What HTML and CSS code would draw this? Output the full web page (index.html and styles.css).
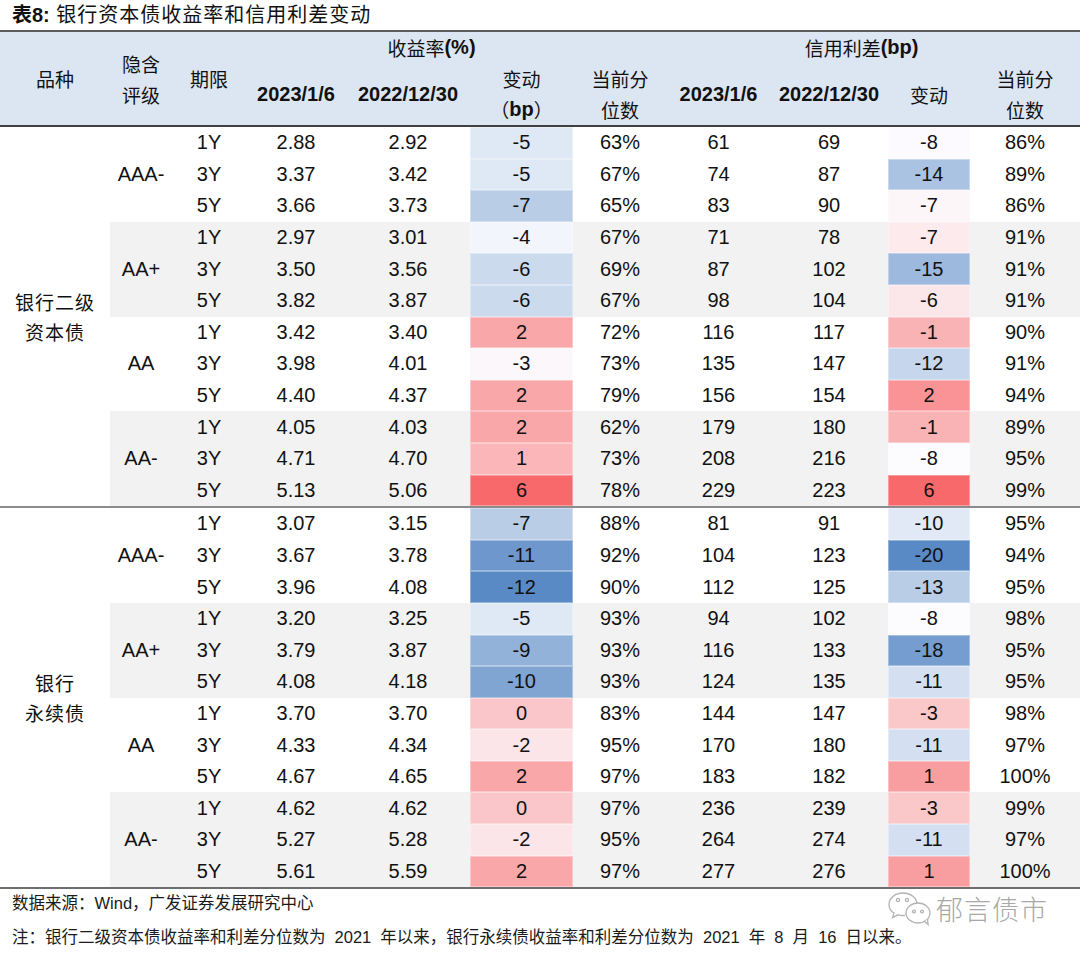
FILE: index.html
```html
<!DOCTYPE html>
<html lang="zh-CN">
<head>
<meta charset="utf-8">
<title>表8</title>
<link rel="stylesheet" href="styles.css">
</head>
<body>
<div class="title"><span class="b">表8:</span> 银行资本债收益率和信用利差变动</div>
<table class="tbl">
<colgroup>
<col style="width:110px"><col style="width:62px"><col style="width:74px"><col style="width:100px"><col style="width:124px"><col style="width:103px"><col style="width:94px"><col style="width:103px"><col style="width:118px"><col style="width:82px"><col style="width:110px">
</colgroup>
<thead>
<tr>
<th rowspan="3" class="cn">品种</th>
<th rowspan="3" class="cn">隐含<br>评级</th>
<th rowspan="3" class="cn">期限</th>
<th colspan="4" class="grp-l"><span class="cn">收益率</span><span class="b">(%)</span></th>
<th colspan="4" class="grp-r"><span class="cn">信用利差</span><span class="b">(bp)</span></th>
</tr>
<tr>
<th rowspan="2" class="b">2023/1/6</th>
<th rowspan="2" class="b">2022/12/30</th>
<th class="cn">变动</th>
<th rowspan="2" class="cn">当前分<br>位数</th>
<th rowspan="2" class="b">2023/1/6</th>
<th rowspan="2" class="b">2022/12/30</th>
<th rowspan="2" class="cn">变动</th>
<th rowspan="2" class="cn">当前分<br>位数</th>
</tr>
<tr>
<th><span class="cn">（</span><span class="b">bp</span><span class="cn">）</span></th>
</tr>
</thead>
<tbody>
<tr><td rowspan="12" class="cat">银行二级<br>资本债</td><td rowspan="3">AAA-</td><td>1Y</td><td>2.88</td><td>2.92</td><td class="hm" style="background:#dfe8f5">-5</td><td>63%</td><td>61</td><td>69</td><td class="hm" style="background:#fcfaff">-8</td><td>86%</td></tr>
<tr><td>3Y</td><td>3.37</td><td>3.42</td><td class="hm" style="background:#dfe8f5">-5</td><td>67%</td><td>74</td><td>87</td><td class="hm" style="background:#abc3e3">-14</td><td>89%</td></tr>
<tr><td>5Y</td><td>3.66</td><td>3.73</td><td class="hm" style="background:#b9cde7">-7</td><td>65%</td><td>83</td><td>90</td><td class="hm" style="background:#fcf6f9">-7</td><td>86%</td></tr>
<tr class="g"><td rowspan="3">AA+</td><td>1Y</td><td>2.97</td><td>3.01</td><td class="hm" style="background:#f3f5fc">-4</td><td>67%</td><td>71</td><td>78</td><td class="hm" style="background:#fceaed">-7</td><td>91%</td></tr>
<tr class="g"><td>3Y</td><td>3.50</td><td>3.56</td><td class="hm" style="background:#ccdaee">-6</td><td>69%</td><td>87</td><td>102</td><td class="hm" style="background:#9eb9de">-15</td><td>91%</td></tr>
<tr class="g"><td>5Y</td><td>3.82</td><td>3.87</td><td class="hm" style="background:#ccdaee">-6</td><td>67%</td><td>98</td><td>104</td><td class="hm" style="background:#fbe7ea">-6</td><td>91%</td></tr>
<tr><td rowspan="3">AA</td><td>1Y</td><td>3.42</td><td>3.40</td><td class="hm" style="background:#faa7a9">2</td><td>72%</td><td>116</td><td>117</td><td class="hm" style="background:#fab3b5">-1</td><td>90%</td></tr>
<tr><td>3Y</td><td>3.98</td><td>4.01</td><td class="hm" style="background:#fcf7fa">-3</td><td>73%</td><td>135</td><td>147</td><td class="hm" style="background:#c6d6ec">-12</td><td>91%</td></tr>
<tr><td>5Y</td><td>4.40</td><td>4.37</td><td class="hm" style="background:#faa7a9">2</td><td>79%</td><td>156</td><td>154</td><td class="hm" style="background:#f99395">2</td><td>94%</td></tr>
<tr class="g"><td rowspan="3">AA-</td><td>1Y</td><td>4.05</td><td>4.03</td><td class="hm" style="background:#faa7a9">2</td><td>62%</td><td>179</td><td>180</td><td class="hm" style="background:#fab3b5">-1</td><td>89%</td></tr>
<tr class="g"><td>3Y</td><td>4.71</td><td>4.70</td><td class="hm" style="background:#fab6b9">1</td><td>73%</td><td>208</td><td>216</td><td class="hm" style="background:#fcfcff">-8</td><td>95%</td></tr>
<tr class="g"><td>5Y</td><td>5.13</td><td>5.06</td><td class="hm" style="background:#f8696b">6</td><td>78%</td><td>229</td><td>223</td><td class="hm" style="background:#f8696b">6</td><td>99%</td></tr>
</tbody>
<tbody class="sep">
<tr><td rowspan="12" class="cat">银行<br>永续债</td><td rowspan="3">AAA-</td><td>1Y</td><td>3.07</td><td>3.15</td><td class="hm" style="background:#b9cde7">-7</td><td>88%</td><td>81</td><td>91</td><td class="hm" style="background:#e1e9f6">-10</td><td>95%</td></tr>
<tr><td>3Y</td><td>3.67</td><td>3.78</td><td class="hm" style="background:#6d97cd">-11</td><td>92%</td><td>104</td><td>123</td><td class="hm" style="background:#5a8ac6">-20</td><td>94%</td></tr>
<tr><td>5Y</td><td>3.96</td><td>4.08</td><td class="hm" style="background:#5a8ac6">-12</td><td>90%</td><td>112</td><td>125</td><td class="hm" style="background:#b9cde7">-13</td><td>95%</td></tr>
<tr class="g"><td rowspan="3">AA+</td><td>1Y</td><td>3.20</td><td>3.25</td><td class="hm" style="background:#dfe8f5">-5</td><td>93%</td><td>94</td><td>102</td><td class="hm" style="background:#fcfcff">-8</td><td>98%</td></tr>
<tr class="g"><td>3Y</td><td>3.79</td><td>3.87</td><td class="hm" style="background:#93b2da">-9</td><td>93%</td><td>116</td><td>133</td><td class="hm" style="background:#759dd0">-18</td><td>95%</td></tr>
<tr class="g"><td>5Y</td><td>4.08</td><td>4.18</td><td class="hm" style="background:#80a5d3">-10</td><td>93%</td><td>124</td><td>135</td><td class="hm" style="background:#d4e0f1">-11</td><td>95%</td></tr>
<tr><td rowspan="3">AA</td><td>1Y</td><td>3.70</td><td>3.70</td><td class="hm" style="background:#fbc6c9">0</td><td>83%</td><td>144</td><td>147</td><td class="hm" style="background:#fbc8ca">-3</td><td>98%</td></tr>
<tr><td>3Y</td><td>4.33</td><td>4.34</td><td class="hm" style="background:#fbe5e8">-2</td><td>95%</td><td>170</td><td>180</td><td class="hm" style="background:#d4e0f1">-11</td><td>97%</td></tr>
<tr><td>5Y</td><td>4.67</td><td>4.65</td><td class="hm" style="background:#faa7a9">2</td><td>97%</td><td>183</td><td>182</td><td class="hm" style="background:#f99ea0">1</td><td>100%</td></tr>
<tr class="g"><td rowspan="3">AA-</td><td>1Y</td><td>4.62</td><td>4.62</td><td class="hm" style="background:#fbc6c9">0</td><td>97%</td><td>236</td><td>239</td><td class="hm" style="background:#fbc8ca">-3</td><td>99%</td></tr>
<tr class="g"><td>3Y</td><td>5.27</td><td>5.28</td><td class="hm" style="background:#fbe5e8">-2</td><td>95%</td><td>264</td><td>274</td><td class="hm" style="background:#d4e0f1">-11</td><td>97%</td></tr>
<tr class="g"><td>5Y</td><td>5.61</td><td>5.59</td><td class="hm" style="background:#faa7a9">2</td><td>97%</td><td>277</td><td>276</td><td class="hm" style="background:#f99ea0">1</td><td>100%</td></tr>
</tbody>
</table>
<div class="foot">
<p class="note">数据来源：Wind，广发证券发展研究中心</p>
<p class="note wide">注：银行二级资本债收益率和利差分位数为 2021 年以来，银行永续债收益率和利差分位数为 2021 年 8 月 16 日以来。</p>
<div class="logo">
<svg class="wx" width="48" height="38" viewBox="0 0 48 38" fill="none" stroke="#b3b3b3" stroke-width="1.3">
<path d="M17 3C9 3 3 8.3 3 14.5c0 3.6 2 6.6 5 8.6l-1.6 4.6 5.6-2.9c1.6.5 3.3.7 5 .7 0.7 0 1.4 0 2-.1" fill="#fff"/>
<path d="M17 3c7.4 0 13.5 4.5 14 10.4"/>
<ellipse cx="32" cy="23" rx="12" ry="10" fill="#fff"/>
<path d="M38.5 31.3l3.6 3.2-0.6-4.8" fill="#fff"/>
<circle cx="12" cy="10" r="1.6"/>
<circle cx="21" cy="10" r="1.6"/>
<circle cx="28" cy="21.5" r="1.4"/>
<circle cx="36" cy="21.5" r="1.4"/>
</svg>
<span class="brand">郁言债市</span>
</div>
</div>
</body>
</html>
```
FILE: styles.css
```css
html, body {
  margin: 0;
  padding: 0;
  background: #fff;
}
body {
  width: 1080px;
  color: #111;
  font-family: "Liberation Sans", "Noto Sans CJK SC", sans-serif;
}
.title {
  height: 30px;
  line-height: 30px;
  padding-left: 12px;
  font-size: 20px;
  letter-spacing: 1px;
  color: #111;
  white-space: nowrap;
}
.b {
  font-weight: bold;
  letter-spacing: 0;
}
.cn {
  font-family: "Noto Sans CJK SC", sans-serif;
  font-weight: normal;
}
.tbl {
  width: 1080px;
  border-collapse: collapse;
  table-layout: fixed;
  font-size: 20px;
  border-bottom: 2px solid #6e6e6e;
}
.tbl thead {
  background: #dce6f2;
  border-top: 2px solid #5e5e5e;
  border-bottom: 2px solid #404040;
}
.tbl thead tr {
  height: 31px;
}
.tbl th {
  height: 31px;
  padding: 0;
  line-height: 31px;
  text-align: center;
  vertical-align: middle;
  font-weight: normal;
  white-space: nowrap;
}
.tbl th.b,
.tbl th .b {
  font-weight: bold;
}
.tbl th span {
  vertical-align: top;
  line-height: 31px;
}
.tbl th.cn {
  font-size: 19px;
}
.tbl th .cn {
  font-size: 19px;
}
.tbl th.grp-l {
  padding-right: 50px;
}
.tbl th.grp-r {
  padding-right: 24px;
}
.tbl td {
  height: 31.6px;
  padding: 0;
  text-align: center;
  vertical-align: middle;
  white-space: nowrap;
}
.tbl tr.g td {
  background: #f2f2f2;
}
.tbl td.hm {
  box-shadow: inset 0 0 0 1px rgba(255, 255, 255, 0.35);
}
.tbl td.cat {
  background: #fff;
  font-family: "Noto Sans CJK SC", sans-serif;
  font-size: 19px;
  line-height: 30px;
  letter-spacing: 1px;
}
.tbl tbody.sep {
  border-top: 2px solid #8c8c8c;
}
.foot {
  position: relative;
  padding-left: 12px;
  margin-top: -2px;
}
.note {
  margin: 0;
  height: 32px;
  line-height: 32px;
  font-size: 16.5px;
  color: #1a1a1a;
  white-space: nowrap;
}
.note + .note {
  margin-top: 2px;
}
.note.wide {
  word-spacing: 4.5px;
}
.logo {
  position: absolute;
  top: 3px;
  left: 886px;
  display: flex;
  align-items: center;
  gap: 2px;
}
.wx {
  display: block;
}
.brand {
  font-family: "Noto Sans CJK SC", sans-serif;
  font-weight: 300;
  font-size: 27px;
  color: #a8a8a8;
  letter-spacing: 1px;
  line-height: 34px;
}
```
